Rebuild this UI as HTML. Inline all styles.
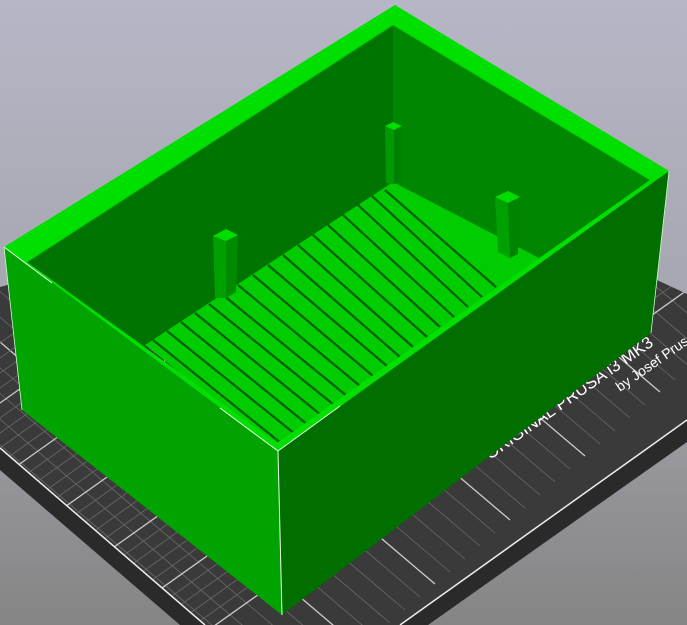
<!DOCTYPE html>
<html><head><meta charset="utf-8"><style>html,body{margin:0;padding:0;width:687px;height:625px;overflow:hidden}svg{display:block}</style></head><body>
<svg width="687" height="625" viewBox="0 0 687 625" xmlns="http://www.w3.org/2000/svg">
<defs>
<linearGradient id="bg" x1="0" y1="0" x2="0" y2="1">
<stop offset="0" stop-color="#b6b6c6"/><stop offset="0.5" stop-color="#a6a6b0"/><stop offset="1" stop-color="#858585"/>
</linearGradient>
<clipPath id="bedc"><polygon points="0,287 300,205 657,280 687,294 687,420 400,625 205,625 0,448"/></clipPath>
</defs>
<rect width="687" height="625" fill="url(#bg)"/>
<polygon points="0,448 205,625 180,625 0,470" fill="#2a2a2a"/>
<polygon points="400,625 687,420 687,442 428,625" fill="#2a2a2a"/>
<polygon points="0,287 300,205 657,280 687,294 687,420 400,625 205,625 0,448" fill="#3a3a3a"/>
<g clip-path="url(#bedc)" stroke="#6a6a6a" stroke-width="0.8" fill="none">
<g id="fa">
<line x1="-300" y1="190" x2="300" y2="700"/><line x1="-285" y1="177" x2="315" y2="687"/><line x1="-270" y1="164" x2="330" y2="674"/><line x1="-255" y1="151" x2="345" y2="661"/>
<line x1="-240" y1="138" x2="360" y2="648" stroke="#ccc" stroke-width="1.3"/>
</g>
<use href="#fa" transform="translate(75,-64)"/><use href="#fa" transform="translate(150,-128)"/><use href="#fa" transform="translate(225,-192)"/>
<use href="#fa" transform="translate(300,-256)"/><use href="#fa" transform="translate(375,-320)"/><use href="#fa" transform="translate(450,-384)"/><use href="#fa" transform="translate(525,-448)"/><use href="#fa" transform="translate(600,-512)"/><use href="#fa" transform="translate(675,-576)"/><use href="#fa" transform="translate(-75,64)"/>
<g id="fb">
<line x1="-200" y1="560" x2="800" y2="-150"/><line x1="-200" y1="575" x2="800" y2="-135"/><line x1="-200" y1="590" x2="800" y2="-120"/><line x1="-200" y1="605" x2="800" y2="-105"/>
<line x1="-200" y1="620" x2="800" y2="-90" stroke="#ccc" stroke-width="1.3"/>
</g>
<use href="#fb" transform="translate(0,75)"/><use href="#fb" transform="translate(0,150)"/><use href="#fb" transform="translate(0,225)"/><use href="#fb" transform="translate(0,300)"/><use href="#fb" transform="translate(0,-75)"/>
</g>
<line x1="0" y1="448" x2="205" y2="625" stroke="#eee" stroke-width="1.5"/>
<line x1="400" y1="625" x2="687" y2="420" stroke="#eee" stroke-width="1.5"/>
<text x="0" y="0" transform="translate(490,460) rotate(-35)" fill="#fff" font-family="Liberation Sans, sans-serif" font-size="17">ORIGINAL PRUSA i3 MK3</text>
<text x="0" y="0" transform="translate(620,392) rotate(-35)" fill="#fff" font-family="Liberation Sans, sans-serif" font-size="14">by Josef Prusa</text>
<polygon points="27,262 393,25 393,183 140,350 27,350" fill="#007400"/>
<polygon points="393,25 650,180 545,261 393,183" fill="#008600"/>
<polygon points="145,345 393,182 545,261 277,450" fill="#00cc00"/>
<g stroke="#005c00" stroke-width="2.2">
<line x1="153" y1="340" x2="282" y2="444"/><line x1="167" y1="331" x2="295" y2="434"/><line x1="181" y1="322" x2="308" y2="425"/><line x1="195" y1="313" x2="321" y2="415"/>
<line x1="209" y1="304" x2="334" y2="405"/><line x1="223" y1="295" x2="347" y2="396"/><line x1="238" y1="285" x2="360" y2="386"/><line x1="253" y1="275" x2="373" y2="376"/>
<line x1="268" y1="265" x2="387" y2="366"/><line x1="283" y1="255" x2="400" y2="357"/><line x1="298" y1="245" x2="413" y2="347"/><line x1="313" y1="235" x2="427" y2="337"/>
<line x1="328" y1="225" x2="440" y2="327"/><line x1="343" y1="215" x2="454" y2="317"/><line x1="358" y1="205" x2="468" y2="307"/><line x1="372" y1="196" x2="482" y2="297"/><line x1="385" y1="190" x2="496" y2="287"/>
</g>
<polygon points="213,236 226,241 226,298 215,298" fill="#00a000"/><polygon points="226,241 238,235 236,292 226,298" fill="#008a00"/><polygon points="213,236 226,229 238,235 226,241" fill="#00dd00"/>
<polygon points="385,126 394,130 394,184 386,183" fill="#009a00"/><polygon points="394,130 402,126 401,181 394,184" fill="#008000"/><polygon points="385,126 393,122 402,126 394,130" fill="#00dd00"/>
<polygon points="495,197 508,203 510,258 498,252" fill="#00a000"/><polygon points="508,203 520,197 518,254 510,258" fill="#008400"/><polygon points="495,197 508,191 520,197 508,203" fill="#00dd00"/>
<path d="M4,247 L395,5 L669,171 L278,451 Z M27,262 L277,443 L650,180 L393,25 Z" fill="#00e000" fill-rule="evenodd"/>
<line x1="27" y1="262" x2="393" y2="25" stroke="#00c000" stroke-width="1"/>
<line x1="393" y1="25" x2="650" y2="180" stroke="#00c000" stroke-width="1"/>
<polygon points="4,247 278,451 282,615 22,410" fill="#00a300"/>
<polygon points="278,451 669,171 651,333 282,615" fill="#006f00"/>
<line x1="278" y1="451" x2="282" y2="615" stroke="#e8ffe8" stroke-width="1"/>
<line x1="4" y1="247" x2="52" y2="283" stroke="#e8ffe8" stroke-width="1"/>
<line x1="4" y1="247" x2="22" y2="410" stroke="#c8ffc8" stroke-width="0.8"/>
<line x1="669" y1="171" x2="651" y2="333" stroke="#c8ffc8" stroke-width="0.8"/>
<line x1="220" y1="408" x2="278" y2="451" stroke="#e8ffe8" stroke-width="1"/>
<line x1="278" y1="451" x2="340" y2="406" stroke="#e8ffe8" stroke-width="1"/>
</svg>
</body></html>
